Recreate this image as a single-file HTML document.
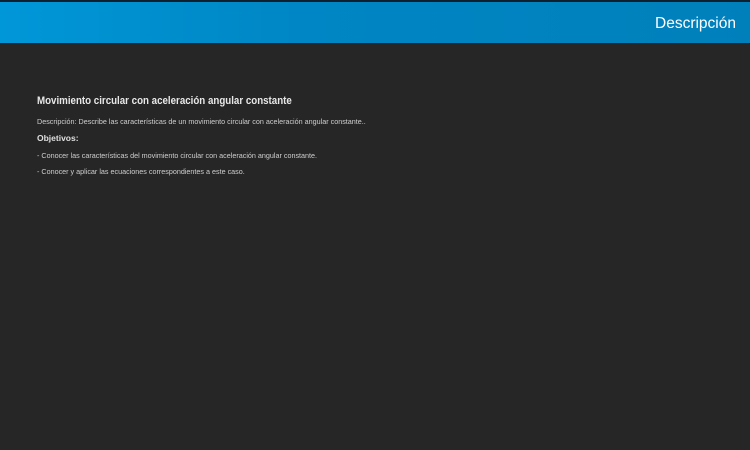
<!DOCTYPE html>
<html><head><meta charset="utf-8"><style>
html,body{margin:0;padding:0;width:750px;height:450px;overflow:hidden;background:#262626;font-family:"Liberation Sans",sans-serif;}
.top{position:absolute;left:0;top:0;width:750px;height:2px;background:#0d2030;}
.hdr{position:absolute;left:0;top:2px;width:750px;height:41px;background:linear-gradient(90deg,#0097d8 0%,#0086c4 40%,#0080bb 100%);}
.hdr span{position:absolute;right:14px;top:13px;color:#fff;font-size:15.5px;}
.c{position:absolute;left:37px;color:#ddd;white-space:nowrap;transform-origin:0 0;}
.t{top:95px;font-size:11px;font-weight:bold;color:#e8e8e8;transform:scaleX(0.885);}
.s{font-size:7.2px;color:#cfcfcf;}
.o{top:133px;font-size:8.5px;font-weight:bold;color:#e0e0e0;}
</style></head><body>
<div class="top"></div>
<div class="hdr"><span>Descripción</span></div>
<div class="c t">Movimiento circular con aceleración angular constante</div>
<div class="c s" style="top:117px">Descripción: Describe las características de un movimiento circular con aceleración angular constante..</div>
<div class="c o">Objetivos:</div>
<div class="c s" style="top:151px">- Conocer las características del movimiento circular con aceleración angular constante.</div>
<div class="c s" style="top:167px">- Conocer y aplicar las ecuaciones correspondientes a este caso.</div>
</body></html>
